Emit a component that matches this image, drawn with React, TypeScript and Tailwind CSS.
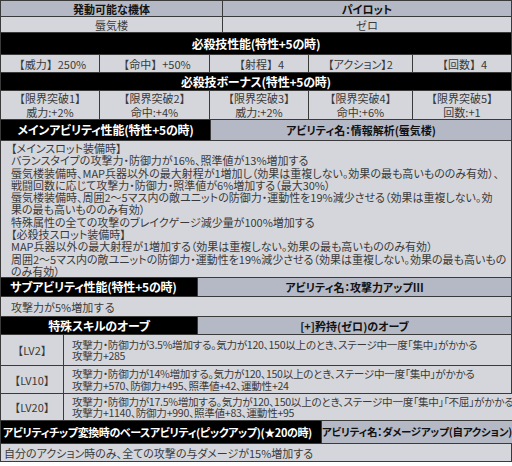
const head = "bg-[#b5b9c5] text-[#111] font-semibold text-[11px] [font-feature-settings:'palt']";
const cell = "bg-[#d5d6db] text-[#3a3a3a] text-[11px]";
const black = "bg-black text-white font-bold text-[12px] tracking-[-0.2px] [font-feature-settings:'palt']";
const line = "border-[#3a3a3a]";

const skill = ["【威力】250%", "【命中】+50%", "【射程】4", "【アクション】2", "【回数】4"];
const bonus = [
  ["【限界突破1】", "威力:+2%"],
  ["【限界突破2】", "命中:+4%"],
  ["【限界突破3】", "威力:+2%"],
  ["【限界突破4】", "命中:+6%"],
  ["【限界突破5】", "回数:+1"],
];

const mainLines = [
  "【メインスロット装備時】",
  "バランスタイプの攻撃力・防御力が16%、照準値が13%増加する",
  "蜃気楼装備時、MAP兵器以外の最大射程が1増加し（効果は重複しない。効果の最も高いもののみ有効）、",
  "戦闘回数に応じて攻撃力・防御力・照準値が6%増加する（最大30%）",
  "蜃気楼装備時、周囲2～5マス内の敵ユニットの防御力・運動性を19%減少させる（効果は重複しない。効",
  "果の最も高いもののみ有効）",
  "特殊属性の全ての攻撃のブレイクゲージ減少量が100%増加する",
  "【必殺技スロット装備時】",
  "MAP兵器以外の最大射程が1増加する（効果は重複しない。効果の最も高いもののみ有効）",
  "周囲2～5マス内の敵ユニットの防御力・運動性を19%減少させる（効果は重複しない。効果の最も高いもの",
  "のみ有効）",
];

const orbs = [
  {
    lv: "【LV2】",
    h: "h-[31px]",
    lines: ["攻撃力・防御力が3.5%増加する。気力が120、150以上のとき、ステージ中一度「集中」がかかる", "攻撃力+285"],
  },
  {
    lv: "【LV10】",
    h: "h-[28px]",
    lines: [
      "攻撃力・防御力が14%増加する。気力が120、150以上のとき、ステージ中一度「集中」がかかる",
      "攻撃力+570、防御力+495、照準値+42、運動性+24",
    ],
  },
  {
    lv: "【LV20】",
    h: "h-[27px]",
    lines: [
      "攻撃力・防御力が17.5%増加する。気力が120、150以上のとき、ステージ中一度「集中」「不屈」がかかる",
      "攻撃力+1140、防御力+990、照準値+83、運動性+95",
    ],
  },
];

export default function App() {
  return (
    <div className="w-[512px] h-[466px] bg-white font-['Noto_Sans_CJK_JP',sans-serif] leading-[12px]">
      <div className={`border-t border-x ${line}`}>
        <div className={`grid grid-cols-[222px_1fr] h-[16px] border-b ${line}`}>
          <div className={`${head} flex items-center justify-center border-r ${line}`}>発動可能な機体</div>
          <div className={`${head} flex items-center justify-center`}>パイロット</div>
        </div>
        <div className={`grid grid-cols-[222px_1fr] h-[16px] border-b ${line}`}>
          <div className={`${cell} flex items-center justify-center border-r ${line}`}>蜃気楼</div>
          <div className={`${cell} flex items-center justify-center`}>ゼロ</div>
        </div>

        <div className={`${black} h-[22px] flex items-center justify-center border-b ${line}`}>
          必殺技性能(特性+5の時)
        </div>
        <div className={`grid grid-cols-[99px_110px_99px_104px_1fr] h-[18px] border-b ${line}`}>
          {skill.map((s, i) => (
            <div
              key={s}
              className={`${cell} flex items-center justify-center ${i < 4 ? `border-r ${line}` : ""} ${
                i === 3 ? "[font-feature-settings:'palt']" : ""
              }`}
            >
              {s}
            </div>
          ))}
        </div>

        <div className={`${black} h-[18px] flex items-center justify-center border-b ${line}`}>
          必殺技ボーナス(特性+5の時)
        </div>
        <div className={`grid grid-cols-[99px_110px_99px_104px_1fr] h-[29px] border-b ${line}`}>
          {bonus.map(([a, b], i) => (
            <div
              key={a}
              className={`${cell} flex flex-col items-center justify-center leading-[14px] ${
                i < 4 ? `border-r ${line}` : ""
              }`}
            >
              <span>{a}</span>
              <span>{b}</span>
            </div>
          ))}
        </div>

        <div className={`grid grid-cols-[210px_1fr] h-[21px] border-b ${line}`}>
          <div className={`${black} flex items-center justify-center border-r ${line}`}>
            メインアビリティ性能(特性+5の時)
          </div>
          <div className={`${head} flex items-center justify-center`}>アビリティ名：情報解析(蜃気楼)</div>
        </div>
        <div
          className={`${cell} [font-feature-settings:'palt'] h-[137px] border-b ${line} pl-[10px] pt-[1px] leading-[12.3px] whitespace-nowrap`}
        >
          {mainLines.map((l, i) => (
            <div key={i}>{l}</div>
          ))}
        </div>

        <div className={`grid grid-cols-[197px_1fr] h-[19px] border-b ${line}`}>
          <div className={`${black} flex items-center pl-[9px] border-r ${line}`}>サブアビリティ性能(特性+5の時)</div>
          <div className={`${head} flex items-center justify-center`}>アビリティ名：攻撃力アップⅢ</div>
        </div>
        <div className={`${cell} h-[20px] flex items-center pl-[10px] border-b ${line}`}>攻撃力が5%増加する</div>

        <div className={`grid grid-cols-[197px_1fr] h-[18px] border-b ${line}`}>
          <div className={`${black} flex items-center justify-center border-r ${line}`}>特殊スキルのオーブ</div>
          <div className={`${head} flex items-center justify-center`}>[+]矜持(ゼロ)のオーブ</div>
        </div>
        {orbs.map((o) => (
          <div key={o.lv} className={`grid grid-cols-[63px_1fr] ${o.h} border-b ${line}`}>
            <div className={`${cell} flex items-center justify-center border-r ${line}`}>{o.lv}</div>
            <div
              className={`${cell} [font-feature-settings:'palt'] !text-[10.6px] tracking-[-0.3px] leading-[11.5px] flex flex-col justify-center pl-[8px] whitespace-nowrap`}
            >
              {o.lines.map((l) => (
                <span key={l}>{l}</span>
              ))}
            </div>
          </div>
        ))}

        <div className={`grid grid-cols-[321px_1fr] h-[23px] border-b ${line}`}>
          <div
            className={`${black} !text-[11px] !tracking-[-0.4px] flex items-center pl-[2px] border-r ${line} whitespace-nowrap`}
          >
            アビリティチップ変換時のベースアビリティ(ピックアップ)(★20の時)
          </div>
          <div className={`${head} !text-[10.5px] tracking-[-0.2px] flex items-center justify-center whitespace-nowrap`}>
            アビリティ名：ダメージアップ(自アクション)
          </div>
        </div>
        <div className={`${cell} [font-feature-settings:'palt'] h-[18px] flex items-center pl-[3px] border-b ${line}`}>
          自分のアクション時のみ、全ての攻撃の与ダメージが15%増加する
        </div>
      </div>
    </div>
  );
}
